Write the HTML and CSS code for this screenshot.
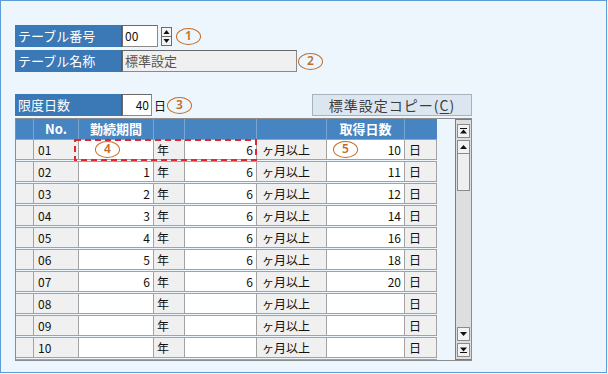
FILE: index.html
```html
<!DOCTYPE html>
<html lang="ja">
<head>
    <meta charset="UTF-8">
    <title>取得日数テーブル</title>
    <link rel="stylesheet" href="styles.css">
</head>
<body>

    <div class="screen">

        <div class="form-row">
            <div class="label">テーブル番号</div>
            <div class="field code-field">00</div>
            <div class="spin">
                <svg width="11" height="19" viewBox="0 0 11 19">
                    <rect x="0.5" y="0.5" width="10" height="18" fill="#f4f4f4" stroke="#6c6c6c"/>
                    <line x1="1" y1="9.5" x2="10" y2="9.5" stroke="#6c6c6c"/>
                    <path d="M5.5 3 L8.5 7 L2.5 7 Z" fill="#111"/>
                    <path d="M2.5 12 L8.5 12 L5.5 16 Z" fill="#111"/>
                </svg>
            </div>
            <span class="mark mark-first">1</span>
        </div>

        <div class="form-row second">
            <div class="label">テーブル名称</div>
            <div class="field name-field">標準設定</div>
            <span class="mark">2</span>
        </div>

        <div class="form-row limit-row">
            <div class="label">限度日数</div>
            <div class="field limit-field">40</div>
            <span class="unit">日</span>
            <span class="mark">3</span>
            <button type="button" class="copy-btn">標準設定コピー(<u>C</u>)</button>
        </div>

        <div class="grid-box">
            <div class="grid">
                <div class="grid-head">
                    <div class="c c1"></div>
                    <div class="c c2">No.</div>
                    <div class="c c3">勤続期間</div>
                    <div class="c c4"></div>
                    <div class="c c5"></div>
                    <div class="c c6"></div>
                    <div class="c c7">取得日数</div>
                    <div class="c c8"></div>
                </div>

                <div class="grid-row">
                    <div class="c c1"></div>
                    <div class="c c2">01</div>
                    <div class="c c3"><span class="mark mark-cell">4</span></div>
                    <div class="c c4">年</div>
                    <div class="c c5 val">6</div>
                    <div class="c c6">ヶ月以上</div>
                    <div class="c c7 val"><span class="mark mark-days">5</span><span class="num">10</span></div>
                    <div class="c c8">日</div>
                </div>
                <div class="grid-row">
                    <div class="c c1"></div><div class="c c2">02</div><div class="c c3 val">1</div><div class="c c4">年</div>
                    <div class="c c5 val">6</div><div class="c c6">ヶ月以上</div><div class="c c7 val">11</div><div class="c c8">日</div>
                </div>
                <div class="grid-row">
                    <div class="c c1"></div><div class="c c2">03</div><div class="c c3 val">2</div><div class="c c4">年</div>
                    <div class="c c5 val">6</div><div class="c c6">ヶ月以上</div><div class="c c7 val">12</div><div class="c c8">日</div>
                </div>
                <div class="grid-row">
                    <div class="c c1"></div><div class="c c2">04</div><div class="c c3 val">3</div><div class="c c4">年</div>
                    <div class="c c5 val">6</div><div class="c c6">ヶ月以上</div><div class="c c7 val">14</div><div class="c c8">日</div>
                </div>
                <div class="grid-row">
                    <div class="c c1"></div><div class="c c2">05</div><div class="c c3 val">4</div><div class="c c4">年</div>
                    <div class="c c5 val">6</div><div class="c c6">ヶ月以上</div><div class="c c7 val">16</div><div class="c c8">日</div>
                </div>
                <div class="grid-row">
                    <div class="c c1"></div><div class="c c2">06</div><div class="c c3 val">5</div><div class="c c4">年</div>
                    <div class="c c5 val">6</div><div class="c c6">ヶ月以上</div><div class="c c7 val">18</div><div class="c c8">日</div>
                </div>
                <div class="grid-row">
                    <div class="c c1"></div><div class="c c2">07</div><div class="c c3 val">6</div><div class="c c4">年</div>
                    <div class="c c5 val">6</div><div class="c c6">ヶ月以上</div><div class="c c7 val">20</div><div class="c c8">日</div>
                </div>
                <div class="grid-row">
                    <div class="c c1"></div><div class="c c2">08</div><div class="c c3 val"></div><div class="c c4">年</div>
                    <div class="c c5 val"></div><div class="c c6">ヶ月以上</div><div class="c c7 val"></div><div class="c c8">日</div>
                </div>
                <div class="grid-row">
                    <div class="c c1"></div><div class="c c2">09</div><div class="c c3 val"></div><div class="c c4">年</div>
                    <div class="c c5 val"></div><div class="c c6">ヶ月以上</div><div class="c c7 val"></div><div class="c c8">日</div>
                </div>
                <div class="grid-row">
                    <div class="c c1"></div><div class="c c2">10</div><div class="c c3 val"></div><div class="c c4">年</div>
                    <div class="c c5 val"></div><div class="c c6">ヶ月以上</div><div class="c c7 val"></div><div class="c c8">日</div>
                </div>
                <!-- next row, only its top edge is visible -->
                <div class="grid-row">
                    <div class="c c1"></div><div class="c c2"></div><div class="c c3"></div><div class="c c4"></div>
                    <div class="c c5"></div><div class="c c6"></div><div class="c c7"></div><div class="c c8"></div>
                </div>

                <!-- focus frame around row 01 -->
                <svg class="focus-frame" width="183" height="22" viewBox="0 0 183 22">
                    <rect x="1" y="1" width="181" height="20" fill="none" stroke="#e0282c" stroke-width="2" stroke-dasharray="6 4"/>
                </svg>
            </div>

            <div class="vscroll">
                <div class="sbtn">
                    <svg width="7" height="6" viewBox="0 0 7 6"><rect x="0" y="0" width="7" height="1" fill="#111"/><path d="M3.5 1.5 L7 5.5 L0 5.5 Z" fill="#111"/></svg>
                </div>
                <div class="sbtn">
                    <svg width="7" height="4" viewBox="0 0 7 4"><path d="M3.5 0 L7 4 L0 4 Z" fill="#111"/></svg>
                </div>
                <div class="thumb"></div>
                <div class="track"></div>
                <div class="sbtn">
                    <svg width="7" height="4" viewBox="0 0 7 4"><path d="M0 0 L7 0 L3.5 4 Z" fill="#111"/></svg>
                </div>
                <div class="sbtn">
                    <svg width="7" height="6" viewBox="0 0 7 6"><path d="M0 0.5 L7 0.5 L3.5 4.5 Z" fill="#111"/><rect x="0" y="5" width="7" height="1" fill="#111"/></svg>
                </div>
            </div>
        </div>

    </div>

</body>
</html>
```

FILE: styles.css
```css
body {
    margin: 0;
    font-family: "Noto Sans CJK JP", "Noto Sans", sans-serif;
    background: #ffffff;
}

.screen {
    width: 607px;
    height: 373px;
    box-sizing: border-box;
    border: 1px solid #5d9cd8;
    background: #edf5fd;
    padding: 24px 0 0 14px;
}

/* top form */

.form-row {
    display: flex;
    align-items: center;
    height: 22px;
}

.form-row.second {
    margin-top: 3px;
}

.label {
    width: 107px;
    height: 22px;
    box-sizing: border-box;
    padding-left: 3px;
    background: #3b78b6;
    color: #fff;
    font-size: 13px;
    line-height: 22px;
    border-right: 1px solid #2e659c;
}

.field {
    height: 22px;
    box-sizing: border-box;
    border: 1px solid #8a8a8a;
    border-top-color: #6a6a6a;
    border-left-color: #6a6a6a;
    background: #fff;
    font-size: 12px;
    line-height: 20px;
    padding: 0 2px;
    color: #111;
}

.code-field {
    width: 36px;
}

.name-field {
    width: 175px;
    background: #f0f0f0;
    color: #555;
    font-size: 13px;
}

.limit-field {
    width: 30px;
    text-align: right;
}

.spin {
    margin-left: 3px;
    height: 19px;
    display: flex;
}

.unit {
    margin-left: 2px;
    font-size: 12px;
    color: #111;
}

.mark {
    width: 25px;
    height: 17px;
    box-sizing: border-box;
    border: 1.5px solid #c26c2a;
    border-radius: 50%;
    color: #c26c2a;
    font-family: "Noto Sans", sans-serif;
    font-size: 12px;
    font-weight: 600;
    line-height: 14px;
    text-align: center;
    margin-left: 1px;
    flex-shrink: 0;
}

.mark-first {
    margin-left: 4px;
}

.limit-row {
    margin-top: 22px;
    width: 457px;
}

.copy-btn {
    margin-left: auto;
    width: 160px;
    height: 22px;
    border: 1px solid #a6b2be;
    background: #dce6f1;
    color: #3c3c3c;
    font-family: "Noto Sans CJK JP", sans-serif;
    font-size: 14px;
    letter-spacing: 1px;
    padding: 0;
    line-height: 20px;
}

.copy-btn u {
    text-underline-offset: 2px;
}

/* grid */

.grid-box {
    margin-top: 2px;
    width: 457px;
    height: 243px;
    box-sizing: border-box;
    border: 1px solid #8c8c8c;
    display: flex;
    justify-content: space-between;
    overflow: hidden;
}

.grid {
    position: relative;
    width: 421px;
}

.grid-head,
.grid-row {
    display: flex;
}

.grid-head {
    height: 20px;
    background: #4684c2;
}

.grid-head .c {
    color: #fff;
    font-weight: bold;
    font-size: 13px;
    line-height: 20px;
    text-align: center;
    border-left: 1px solid #7aa6d3;
}

.grid-head .c1 {
    border-left: none;
}

.grid-row {
    height: 21px;
    box-sizing: border-box;
    border-top: 1px solid #a2a2a2;
    border-bottom: 1px solid #a2a2a2;
    margin-bottom: 1px;
    background: #f0f0f0;
}

.grid-row .c {
    box-sizing: border-box;
    border-left: 1px solid #a2a2a2;
    font-size: 12px;
    line-height: 19px;
    color: #111;
    white-space: nowrap;
}

.grid-row .c1 {
    border-left: none;
}

.grid-row .c8 {
    border-right: 1px solid #a2a2a2;
}

.c {
    box-sizing: border-box;
}

.c1 { width: 17px; }
.c2 { width: 45px; padding-left: 4px; }
.c3 { width: 75px; }
.c4 { width: 31px; padding-left: 3px; }
.c5 { width: 72px; }
.c6 { width: 70px; padding-left: 5px; }
.c7 { width: 78px; }
.c8 { width: 33px; padding-left: 4px; }

.grid-head .c2,
.grid-head .c4,
.grid-head .c6,
.grid-head .c8 {
    padding-left: 0;
}

.grid-row .c3,
.grid-row .c5,
.grid-row .c7 {
    background: #fff;
}

.val {
    text-align: right;
    padding-right: 3px;
}

.grid-row .c3,
.grid-row .c7 {
    display: flex;
    align-items: center;
    justify-content: flex-end;
}

.mark-cell {
    margin-left: 16px;
    margin-right: auto;
}

.mark-days {
    margin-left: 6px;
    margin-right: auto;
}

.focus-frame {
    position: absolute;
    left: 58px;
    top: 20px;
}

/* vertical scrollbar */

.vscroll {
    width: 16px;
    box-sizing: border-box;
    border: 1px solid #7c7c7c;
    border-right: none;
    background: #dedede;
    display: flex;
    flex-direction: column;
    align-items: center;
    padding-top: 4px;
}

.sbtn {
    width: 13px;
    height: 14px;
    box-sizing: border-box;
    border: 1px solid #8a8a8a;
    background: #f2f2f2;
    display: flex;
    align-items: center;
    justify-content: center;
    margin-bottom: 2px;
}

.thumb {
    width: 13px;
    height: 37px;
    box-sizing: border-box;
    border: 1px solid #8a8a8a;
    border-top: none;
    background: #efefef;
    margin-top: -2px;
}

.track {
    flex: 1;
}
```
